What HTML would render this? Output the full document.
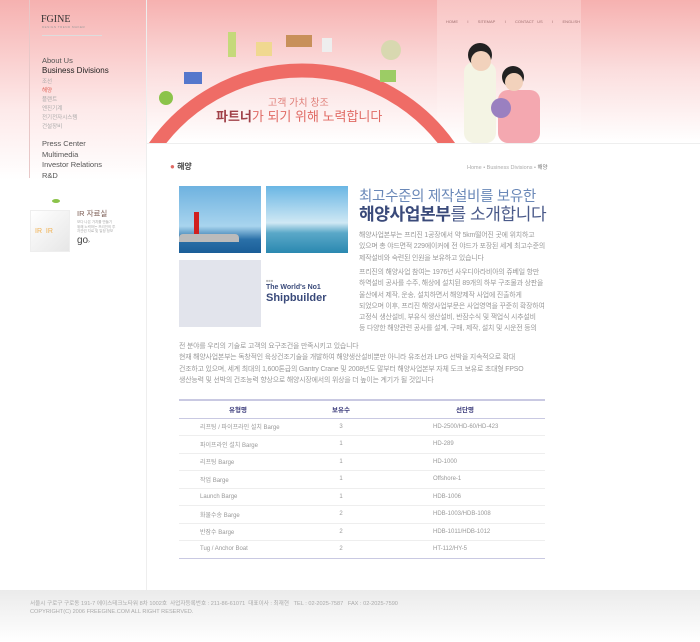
<!DOCTYPE html>
<html><head><meta charset="utf-8"><style>
*{margin:0;padding:0;box-sizing:border-box}
body{width:700px;height:642px;overflow:hidden;background:#fff;font-family:"Liberation Sans","Noto Sans CJK KR",sans-serif;position:relative}
.a{position:absolute;white-space:nowrap}
.hdr{position:absolute;left:0;top:0;width:700px;height:143px;background:linear-gradient(#f6b1b0,#fbdede 50%,#fff 100%)}
.band{position:absolute;left:437px;top:0;width:144px;height:143px;background:linear-gradient(#f9c9c8,#fff);opacity:.8}
.lgrad{position:absolute;left:0;top:0;width:146px;height:180px;background:linear-gradient(#f6b1b0,#fde9e9 60%,#fff)}
.nav{font-size:7.5px;color:#555}
.sub{font-size:5.5px;color:#aaa;line-height:9px}
.p{font-size:6.9px;color:#999;line-height:11.3px;white-space:nowrap;letter-spacing:-.15px}
table{position:absolute;left:179px;top:399px;width:366px;border-collapse:collapse;font-size:6px;color:#999}
th{height:18px;color:#3a3a7a;font-size:6.5px;border-top:2px solid #c9c9e2;border-bottom:1px solid #c9c9e2}
td{height:17.5px;border-bottom:1px solid #eee}
tr:last-child td{border-bottom:1px solid #c9c9e2}
</style></head><body>
<div class="hdr"></div>
<div class="lgrad"></div>
<div class="band"></div>
<div class="a" style="left:29px;top:0;width:1px;height:178px;background:#e8c8c8"></div>
<div class="a" style="left:146px;top:0;width:1px;height:590px;background:#eee"></div>
<div class="a" style="left:146px;top:143px;width:554px;height:1px;background:#eee"></div>
<div class="a" style="left:41px;top:14px;font-family:'Liberation Serif',serif;font-size:10px;color:#333">FGINE</div>
<div class="a" style="left:42px;top:25px;font-size:3px;color:#999;letter-spacing:.5px">DESIGN TREND MAKER</div>
<div class="a" style="left:42px;top:35px;width:60px;height:1px;background:#ddd"></div>
<div class="a nav" style="left:42px;top:56px">About Us</div>
<div class="a nav" style="left:42px;top:66px;color:#222;font-size:8px">Business Divisions</div>
<div class="a sub" style="left:42px;top:78px">조선<br><span style="color:#e0655a">해양</span><br>플랜트<br>엔진기계<br>전기전자시스템<br>건설장비</div>
<div class="a nav" style="left:42px;top:139px;line-height:10.7px">Press Center<br>Multimedia<br>Investor Relations<br>R&amp;D</div>
<div class="a" style="left:30px;top:210px;width:40px;height:42px;background:linear-gradient(135deg,#fff,#e6e6e6);border:1px solid #eee"></div>
<div class="a" style="left:35px;top:228px;font-size:7px;color:#f0b050">IR &nbsp;IR</div>
<div class="a" style="left:52px;top:199px;width:8px;height:4px;background:#8bc34a;border-radius:50%"></div>
<div class="a" style="left:77px;top:208px;font-size:7.5px;color:#7a5a50">IR 자료실</div>
<div class="a" style="left:77px;top:220px;font-size:3.5px;color:#aaa;line-height:4.5px">보다 나은 가치를 만들기<br>위해 노력하는 프리진의 투<br>자관련 자료 및 일정 정보</div>
<div class="a" style="left:77px;top:235px;font-size:10px;color:#444">go<span style="font-size:5px">›</span></div>
<svg class="a" style="left:146px;top:0" width="440" height="143">
<path d="M8 148 A180 180 0 0 1 304 148" fill="none" stroke="#ef6c66" stroke-width="14"/>
<circle cx="20" cy="98" r="7" fill="#8bc34a"/><rect x="38" y="72" width="18" height="12" fill="#5577cc"/>
<rect x="82" y="32" width="8" height="25" fill="#c5d97a"/><rect x="110" y="42" width="16" height="14" fill="#f0d890"/>
<rect x="140" y="35" width="26" height="12" fill="#c8905a"/><rect x="176" y="38" width="10" height="14" fill="#eee"/>
<circle cx="245" cy="50" r="10" fill="#d8d8b0"/><rect x="234" y="70" width="16" height="12" fill="#9ccc65"/>
<rect x="318" y="62" width="32" height="81" rx="10" fill="#f4f4e4"/><circle cx="334" cy="55" r="12" fill="#222"/><circle cx="335" cy="61" r="10" fill="#f2d2bc"/>
<rect x="352" y="90" width="42" height="53" rx="10" fill="#f4a8b0"/><circle cx="367" cy="77" r="11" fill="#222"/><circle cx="368" cy="82" r="9" fill="#f2d2bc"/>
<circle cx="355" cy="108" r="10" fill="#9a80c0"/>
</svg>
<div class="a" style="left:268px;top:94px;font-size:10px;color:#e0807a">고객 가치 창조</div>
<div class="a" style="left:216px;top:106px;font-size:13px;color:#e06a64"><b style="color:#a04048">파트너</b>가 되기 위해 노력합니다</div>
<div class="a" style="left:446px;top:19px;font-size:4px;color:#a07070;word-spacing:2px">HOME &nbsp; I &nbsp; SITEMAP &nbsp; I &nbsp; CONTACT US &nbsp; I &nbsp; ENGLISH</div>
<div class="a" style="left:170px;top:161px;font-size:8px;color:#444;font-weight:bold"><span style="color:#e06a64">●</span> 해양</div>
<div class="a" style="left:467px;top:163px;font-size:5.5px;color:#aaa">Home • Business Divisions • <span style="color:#777">해양</span></div>
<div class="a" style="left:179px;top:186px;width:82px;height:67px;background:linear-gradient(#6eb2e0,#a8d4ee 60%,#2a70a8 80%,#1a5e98)"></div>
<div class="a" style="left:194px;top:212px;width:5px;height:28px;background:#d02020"></div>
<div class="a" style="left:179px;top:234px;width:60px;height:8px;background:#bbb;border-radius:4px 4px 0 0"></div>
<div class="a" style="left:266px;top:186px;width:82px;height:67px;background:linear-gradient(#6ab6e4,#cfe8f4 55%,#5aa8c8 70%,#2a88b0)"></div>
<div class="a" style="left:179px;top:260px;width:82px;height:67px;background:#e2e4ec"></div>
<div class="a" style="left:266px;top:278px;font-size:4px;color:#bbb">■■■</div>
<div class="a" style="left:266px;top:284px;font-size:7px;color:#3a4a7a;font-weight:bold">The World's No1</div>
<div class="a" style="left:266px;top:292px;font-size:11px;color:#3a4a7a;font-weight:bold">Shipbuilder</div>
<div class="a" style="left:359px;top:185px;font-size:14.5px;color:#6a88b8;letter-spacing:-.3px">최고수준의 제작설비를 보유한</div>
<div class="a" style="left:359px;top:200px;font-size:17px;color:#4a5a8a;letter-spacing:-.4px"><b style="color:#3a4a7a">해양사업본부</b>를 소개합니다</div>
<div class="a p" style="left:359px;top:230px">해양사업본부는 프리진 1공장에서 약 5km떨어진 곳에 위치하고<br>있으며 총 야드면적 229에이커에 전 야드가 포장된 세계 최고수준의<br>제작설비와 숙련된 인원을 보유하고 있습니다</div>
<div class="a p" style="left:359px;top:267px">프리진의 해양사업 참여는 1976년 사우디아라비아의 쥬베일 항만<br>하역설비 공사를 수주, 해상에 설치된 89개의 하부 구조물과 상판을<br>울산에서 제작, 운송, 설치하면서 해양제작 사업에 진출하게<br>되었으며 이후, 프리진 해양사업부문은 사업영역을 꾸준히 확장하여<br>고정식 생산설비, 부유식 생산설비, 반잠수식 및 잭업식 시추설비<br>등 다양한 해양관련 공사를 설계, 구매, 제작, 설치 및 시운전 등의</div>
<div class="a p" style="left:179px;top:341px">전 분야를 우리의 기술로 고객의 요구조건을 만족시키고 있습니다<br>현재 해양사업본부는 독창적인 육상건조기술을 개발하여 해양생산설비뿐만 아니라 유조선과 LPG 선박을 지속적으로 확대<br>건조하고 있으며, 세계 최대의 1,600톤급의 Gantry Crane 및 2008년도 말부터 해양사업본부 자체 도크 보유로 초대형 FPSO<br>생산능력 및 선박의 건조능력 향상으로 해양시장에서의 위상을 더 높이는 계기가 될 것입니다</div>
<table>
<tr><th style="width:118px">유형명</th><th style="width:88px">보유수</th><th>선단명</th></tr>
<tr><td style="padding-left:21px">리프팅 / 파이프라인 설치 Barge</td><td align="center">3</td><td style="padding-left:48px">HD-2500/HD-60/HD-423</td></tr>
<tr><td style="padding-left:21px">파이프라인 설치 Barge</td><td align="center">1</td><td style="padding-left:48px">HD-289</td></tr>
<tr><td style="padding-left:21px">리프팅 Barge</td><td align="center">1</td><td style="padding-left:48px">HD-1000</td></tr>
<tr><td style="padding-left:21px">작업 Barge</td><td align="center">1</td><td style="padding-left:48px">Offshore-1</td></tr>
<tr><td style="padding-left:21px">Launch Barge</td><td align="center">1</td><td style="padding-left:48px">HDB-1006</td></tr>
<tr><td style="padding-left:21px">화물수송 Barge</td><td align="center">2</td><td style="padding-left:48px">HDB-1003/HDB-1008</td></tr>
<tr><td style="padding-left:21px">반잠수 Barge</td><td align="center">2</td><td style="padding-left:48px">HDB-1011/HDB-1012</td></tr>
<tr><td style="padding-left:21px">Tug / Anchor Boat</td><td align="center">2</td><td style="padding-left:48px">HT-112/HY-5</td></tr>
</table>
<div class="a" style="left:0;top:590px;width:700px;height:52px;background:linear-gradient(#ebebeb,#fff)"></div>
<div class="a" style="left:30px;top:601px;font-size:5.6px;color:#aaa;line-height:7.5px">서울시 구로구 구로동 191-7 에이스테크노타워 8차 1002호 &nbsp;사업자등록번호 : 211-86-61071 &nbsp;대표이사 : 최재현 &nbsp; TEL : 02-2025-7587 &nbsp; FAX : 02-2025-7590<br>COPYRIGHT(C) 2006 FREEGINE.COM ALL RIGHT RESERVED.</div>
</body></html>
